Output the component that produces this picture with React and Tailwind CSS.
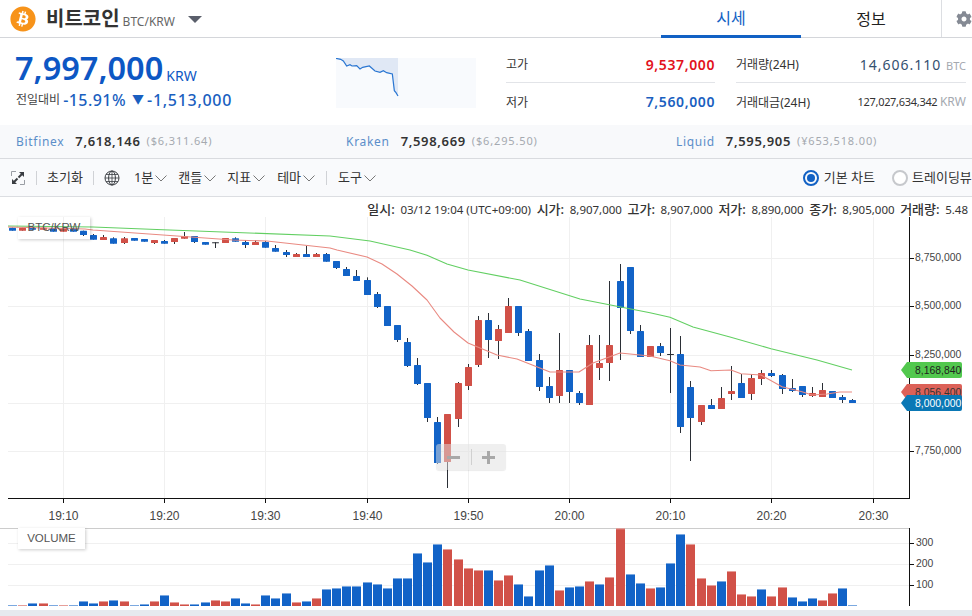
import React from 'react';
import { FaBitcoin, FaCog } from 'react-icons/fa';

const BLUE = '#1263c7';
const RED = '#d15148';
const DARK = '#2b2f36';

// [x, color, bodyTop, bodyBottom, wickTop, wickBottom] — first block in px*3 relative to y=215
const candlesA = [
  [12, 'b', 38, 47], [22, 'r', 38, 47], [32, 'b', 38, 44], [43, 'r', 38, 44], [53, 'b', 40, 50],
  [63, 'r', 40, 50], [73, 'b', 40, 50], [83, 'b', 47, 60, 47, 63], [93, 'b', 60, 74, 57, 74],
  [103, 'r', 66, 75, 60, 75], [113, 'b', 70, 86, 67, 86], [124, 'r', 70, 84, 66, 87],
  [134, 'b', 69, 77], [144, 'b', 72, 80], [154, 'r', 75, 84, 75, 87], [164, 'b', 78, 86, 75, 86],
  [174, 'r', 69, 81, 69, 87], [184, 'r', 63, 71, 51, 71], [194, 'b', 63, 81, 63, 84], [205, 'b', 81, 89],
  [215, 'd', 82, 84, 82, 99], [225, 'r', 69, 84], [235, 'b', 70, 80, 67, 80], [245, 'b', 81, 90, 75, 99],
  [255, 'r', 81, 90, 75, 90], [265, 'b', 81, 98, 78, 98], [275, 'b', 99, 110, 90, 110],
  [286, 'b', 111, 120, 105, 126], [296, 'r', 117, 126, 114, 126], [306, 'b', 117, 126, 93, 126],
  [316, 'r', 117, 126, 114, 126], [326, 'b', 117, 140, 114, 140],
].map(c => toPx(c, 215));

// relative to y=250
const candlesB = [
  [336, 'b', 33, 54, 33, 57], [346, 'b', 57, 78, 51, 78], [356, 'b', 78, 93, 60, 93], [367, 'b', 90, 135, 82, 135],
  [377, 'b', 132, 171, 126, 174], [387, 'b', 168, 228], [397, 'b', 225, 270, 225, 276], [407, 'b', 276, 348, 264, 351],
  [417, 'b', 345, 402, 324, 405], [427, 'b', 399, 504, 399, 516], [437, 'b', 516, 639, 501, 642],
  [447, 'r', 492, 636, 492, 714], [458, 'r', 399, 507, 396, 531], [468, 'r', 351, 408, 342, 420],
  [478, 'r', 210, 345, 198, 351], [488, 'b', 210, 270, 189, 324], [498, 'r', 237, 273, 225, 327],
  [508, 'r', 168, 249, 144, 249], [518, 'b', 168, 249, 168, 258], [528, 'b', 243, 333, 237, 333],
  [539, 'b', 330, 411, 312, 423], [549, 'b', 408, 444, 381, 459], [559, 'r', 360, 438, 249, 459],
  [569, 'b', 360, 426, 360, 459], [579, 'b', 429, 459, 423, 465], [589, 'r', 285, 465, 255, 465],
  [599, 'r', 339, 354, 255, 390], [609, 'r', 285, 339, 93, 393], [620, 'b', 93, 174, 42, 330],
  [630, 'b', 51, 243, 51, 252], [640, 'b', 243, 321, 225, 321], [650, 'r', 288, 321],
  [660, 'b', 288, 309, 279, 318], [670, 'd', 312, 315, 234, 429], [680, 'b', 312, 531, 258, 549],
  [690, 'b', 411, 504, 393, 633], [701, 'r', 465, 516, 465, 525], [711, 'b', 465, 477, 447, 477],
  [721, 'r', 444, 477, 411, 477], [731, 'r', 423, 432, 348, 450], [741, 'b', 399, 444, 372, 444],
  [751, 'r', 384, 432, 372, 450], [761, 'r', 369, 387, 360, 405], [771, 'b', 369, 378, 360, 381],
  [782, 'b', 375, 417, 372, 432], [792, 'b', 414, 423, 387, 426], [802, 'b', 408, 435, 408, 441],
  [812, 'r', 429, 438, 411, 441], [822, 'r', 420, 441, 399, 441], [832, 'b', 423, 444],
  [842, 'b', 441, 450, 435, 459], [852, 'b', 450, 459, 447, 459],
].map(c => toPx(c, 250));

function toPx([x, color, top, bottom, wickTop, wickBottom], base) {
  return {
    x,
    color,
    top: base + top / 3,
    bottom: base + bottom / 3,
    wickTop: base + (wickTop ?? top) / 3,
    wickBottom: base + (wickBottom ?? bottom) / 3,
  };
}

const candles = [...candlesA, ...candlesB];

// volume tops, px*3 relative to y=490
const volumeTops = [
  345, 345, 339, 339, 345, 345, 345, 333, 339, 333, 330, 333, 345, 342, 333, 315, 336, 342, 342, 336, 330, 333,
  324, 339, 342, 315, 324, 309, 336, 333, 324, 297, 294, 288, 288, 276, 282, 294, 264, 264, 189, 216, 162, 177,
  207, 234, 240, 240, 270, 255, 282, 318, 240, 225, 300, 291, 288, 273, 282, 261, 115, 252, 279, 294, 291, 219,
  132, 162, 264, 285, 273, 243, 312, 318, 297, 318, 291, 321, 333, 324, 330, 309, 294, 345,
];
const volumeColors = 'brbrbrbbbrbrbbrbrrbbrrbbrbbbrbrbbbbbbbbbbbbrrrrbrrbbbbrbbrbrrbbrbbbrrrbrrrbrrbbbrrbb';

const greenLine = '8,226 93,227 163,229.7 330,236 370,241 410,250 427,255.3 447,264 468,270 520,280 580,299 650,312.7 670,317.3 693,327 730,337 771,348.7 817,360 852,370';
const redLine = '8,227 85,229 93,230 233,240 267,241 330,248 337,250 367,257 382,264 397,274 412,286 427,300 440,318 454,332 468,343 497,355 517,359 550,372 579,372 593,363 620,353 650,356 670,360.7 680,365 700,367 711,370.7 731,370 741,373.7 761,375 782,386.7 802,391.7 812,395 827,394 840,392 852,392';

const sparkPoints = [
  [48, 25], [62, 28], [70, 33], [80, 48], [90, 44], [96, 48], [110, 47], [120, 57], [128, 52], [148, 48], [165, 63],
  [180, 67], [190, 62], [200, 68], [217, 72], [223, 122], [228, 128], [234, 138],
].map(([x, y]) => `${(x - 48) / 3},${(y - 24) / 3}`).join(' ');

const gridX = [63.5, 164.5, 265.5, 367.5, 468.5, 569.5, 670.5, 771.5, 873.5];
const timeLabels = ['19:10', '19:20', '19:30', '19:40', '19:50', '20:00', '20:10', '20:20', '20:30'];
const priceTicks = [[258.5, '8,750,000'], [306.5, '8,500,000'], [355.5, '8,250,000'], [451.5, '7,750,000']];

function Stat({ label, value, className, last }) {
  return (
    <div className={`flex items-center justify-between h-[37px] ${last ? '' : 'border-b border-[#e2e4e8]'}`}>
      <span className="text-[12px] text-[#333] mt-[2px]">{label}</span>
      <span className={`text-[14px] font-semibold tracking-[0.6px] ${className}`}>{value}</span>
    </div>
  );
}

function Exchange({ name, price, sub }) {
  return (
    <div className="flex items-center w-[330px] shrink-0">
      <span className="text-[12px] text-[#5b8ec9] tracking-[0.7px]">{name}</span>
      <span className="text-[13px] font-semibold text-[#333] ml-[11px] tracking-[0.65px]">{price}</span>
      <span className="text-[11px] text-[#a5a9b0] ml-[6px] tracking-[0.85px]">{sub}</span>
    </div>
  );
}

function Menu({ label, className }) {
  return (
    <div className={`flex items-center text-[13px] text-[#333] ${className}`}>
      {label}
      <svg width="12" height="7" viewBox="0 0 12 7" className="ml-[2px] mt-[2px]">
        <path d="M0.5 0.5L6 6L11.5 0.5" fill="none" stroke="#777" strokeWidth="1" />
      </svg>
    </div>
  );
}

function ExpandIcon() {
  return (
    <svg width="14" height="14" viewBox="0 0 14 14" className="ml-[11px]">
      <path d="M0.5 5V0.5H5M9 13.5H13.5V9" fill="none" stroke="#9a9ea5" strokeWidth="1" />
      <path d="M8 1H13V6L11.2 4.2L8.2 7.2L6.8 5.8L9.8 2.8ZM6 13H1V8L2.8 9.8L5.8 6.8L7.2 8.2L4.2 11.2Z" fill="#3a3d42" />
    </svg>
  );
}

function GlobeIcon() {
  return (
    <svg width="16" height="16" viewBox="0 0 16 16" className="ml-[10px]" fill="none" stroke="#3a3d42" strokeWidth="1">
      <circle cx="8" cy="8" r="7" />
      <ellipse cx="8" cy="8" rx="3.4" ry="7" />
      <path d="M8 1V15M1 8H15M2 4.5H14M2 11.5H14" strokeWidth="0.8" />
    </svg>
  );
}

function PriceTag({ y, fill, text, color }) {
  return (
    <g>
      <path
        d={`M901 ${y} L907 ${y - 8} H960 Q962 ${y - 8} 962 ${y - 6} V${y + 6} Q962 ${y + 8} 960 ${y + 8} H907 Z`}
        fill={fill}
      />
      <text x="915" y={y + 4} fontSize="10.4" fill={color} fontFamily="'Liberation Sans', sans-serif">{text}</text>
    </g>
  );
}

function MainChart() {
  return (
    <svg width="972" height="331" viewBox="0 197 972 331" className="block">
      {gridX.map(x => <line key={x} x1={x} x2={x} y1="217" y2="498" stroke="#f0f0f0" />)}
      {[258.5, 306.5, 355.5, 403.5, 451.5].map(y => <line key={y} x1="8" x2="909" y1={y} y2={y} stroke="#f0f0f0" />)}

      {candles.map(c => (
        <g key={c.x}>
          <line x1={c.x + 0.5} x2={c.x + 0.5} y1={c.wickTop} y2={c.wickBottom} stroke={DARK} />
          <rect
            x={c.x - 3}
            y={c.top}
            width="7"
            height={c.color === 'd' ? 1 : c.bottom - c.top}
            rx="0.5"
            fill={c.color === 'b' ? BLUE : c.color === 'r' ? RED : DARK}
          />
        </g>
      ))}

      <polyline points={greenLine} fill="none" stroke="#62cf62" strokeWidth="1.1" />
      <polyline points={redLine} fill="none" stroke="#e98a82" strokeWidth="1.1" strokeLinejoin="round" />

      {/* axes */}
      <line x1="909.5" x2="909.5" y1="217" y2="499" stroke="#111" />
      <line x1="8" x2="910" y1="498.5" y2="498.5" stroke="#111" />
      {gridX.map((x, i) => (
        <g key={x}>
          <line x1={x} x2={x} y1="498" y2="503" stroke="#111" />
          <text x={x} y="520" textAnchor="middle" fontSize="12" fill="#444" fontFamily="'Liberation Sans', sans-serif">{timeLabels[i]}</text>
        </g>
      ))}
      {priceTicks.map(([y, label]) => (
        <g key={label}>
          <line x1="909" x2="914" y1={y} y2={y} stroke="#111" />
          <text x="915" y={y + 2.5} fontSize="10.4" fill="#444" fontFamily="'Liberation Sans', sans-serif">{label}</text>
        </g>
      ))}
      <line x1="909" x2="914" y1="403.5" y2="403.5" stroke="#111" />

      <PriceTag y={370} fill="#52c84e" text="8,168,840" color="#222" />
      <PriceTag y={392} fill="#dc6158" text="8,056,400" color="#333" />
      <PriceTag y={403} fill="#0a78b5" text="8,000,000" color="#fff" />
    </svg>
  );
}

function VolumeChart() {
  return (
    <svg width="972" height="82" viewBox="0 528 972 82" className="block">
      <line x1="0" x2="910" y1="528.5" y2="528.5" stroke="#cccccc" />
      {[543.5, 564.5, 585.5].map(y => <line key={y} x1="8" x2="909" y1={y} y2={y} stroke="#f0f0f0" />)}
      {candles.map((c, i) => {
        const top = 490 + volumeTops[i] / 3;
        return (
          <g key={c.x}>
            <rect x={c.x - 4} y={top} width="9" height={606 - top} fill={volumeColors[i] === 'b' ? BLUE : RED} />
            <rect x={c.x - 4} y={top} width="9" height="1" fill="#fff" opacity="0.45" />
          </g>
        );
      })}
      <line x1="909.5" x2="909.5" y1="528" y2="606" stroke="#111" />
      {[[543.5, '300'], [564.5, '200'], [585.5, '100']].map(([y, label]) => (
        <g key={label}>
          <line x1="909" x2="914" y1={y} y2={y} stroke="#111" />
          <text x="916" y={y + 2.5} fontSize="10.4" fill="#444" fontFamily="'Liberation Sans', sans-serif">{label}</text>
        </g>
      ))}
    </svg>
  );
}

export default function App() {
  return (
    <div className="relative w-[972px] h-[616px] overflow-hidden bg-white font-['Noto_Sans','Noto_Sans_CJK_KR',sans-serif]">
      {/* Header */}
      <header className="flex items-center h-[38px] border-b border-[#d4d6da] pl-[10px]">
        <FaBitcoin size={26} className="text-[#f7931a]" />
        <span className="ml-[10px] text-[20px] font-bold text-[#333] leading-none">비트코인</span>
        <span className="ml-[3px] mt-[6px] text-[12px] text-[#666] font-['Noto_Sans']">BTC/KRW</span>
        <span className="ml-[13px] mt-[2px] w-0 h-0 border-x-[7px] border-x-transparent border-t-[7px] border-t-[#5a5f6b]" />
        <div className="ml-auto flex h-full">
          <div className="w-[140px] flex items-center justify-center text-[16px] text-[#1261c4] border-b-[3px] border-[#1261c4] h-[38px]">시세</div>
          <div className="w-[140px] flex items-center justify-center text-[16px] text-[#222]">정보</div>
          <div className="w-[31px] border-l border-[#dcdee2] flex items-center justify-end overflow-hidden">
            <FaCog size={16} className="text-[#858a94]" />
          </div>
        </div>
      </header>

      {/* Price summary */}
      <section className="flex h-[87px]">
        <div className="w-[336px] pl-[15px] pt-[7px]">
          <div className="flex items-end text-[#0d57c4]">
            <span className="text-[32.5px] font-semibold leading-[46px]">7,997,000</span>
            <span className="text-[14px] ml-[3px] mb-[5px] leading-5">KRW</span>
          </div>
          <div className="flex items-center -mt-[3px]">
            <span className="text-[12px] text-[#444] ml-[1px]">전일대비</span>
            <span className="ml-[3px] text-[16px] font-medium text-[#1a5fc0] tracking-[0.45px]">-15.91%</span>
            <span className="ml-[6px] text-[12px] text-[#1a5fc0]">▼</span>
            <span className="ml-[3px] text-[16px] font-medium text-[#1a5fc0] tracking-[0.7px]">-1,513,000</span>
          </div>
        </div>
        <div className="w-[140px] h-[50px] mt-[20px] bg-[#f8fafd]">
          <svg width="140" height="50" viewBox="0 0 140 50" className="block">
            <polygon points={`${sparkPoints} 62,0 0,0`} fill="#e0e8f5" />
            <polyline points={sparkPoints} fill="none" stroke="#2a76d2" strokeWidth="1.2" />
          </svg>
        </div>
        <div className="w-[209px] ml-[30px] mt-[8px]">
          <Stat label="고가" value="9,537,000" className="text-[#e2111c]" />
          <Stat label="저가" value="7,560,000" className="text-[#1a5fc0]" last />
        </div>
        <div className="w-[230px] ml-[21px] mt-[8px]">
          <div className="flex items-center justify-between h-[37px] border-b border-[#e2e4e8]">
            <span className="text-[12px] text-[#333] mt-[2px]">거래량(24H)</span>
            <span className="text-[14px] text-[#34506f] tracking-[1px]">14,606.110 <span className="text-[11px] text-[#a5a9b0] tracking-normal">BTC</span></span>
          </div>
          <div className="flex items-center justify-between h-[37px]">
            <span className="text-[12px] text-[#333] mt-[2px]">거래대금(24H)</span>
            <span className="text-[11px] text-[#333] tracking-[-0.3px]">127,027,634,342 <span className="text-[12px] text-[#a5a9b0] tracking-normal">KRW</span></span>
          </div>
        </div>
      </section>

      {/* Exchange prices */}
      <section className="flex items-center h-[34px] pl-[16px] bg-[#f8f9fb] border-b border-[#d9dbdf] overflow-hidden">
        <Exchange name="Bitfinex" price="7,618,146" sub="($6,311.64)" />
        <Exchange name="Kraken" price="7,598,669" sub="($6,295.50)" />
        <Exchange name="Liquid" price="7,595,905" sub="(¥653,518.00)" />
      </section>

      {/* Chart toolbar */}
      <section className="flex items-center h-[38px] bg-[#f9fafc] border-b border-[#dcdee2]">
        <ExpandIcon />
        <span className="w-px h-[14px] bg-[#d0d2d6] ml-[11px]" />
        <span className="ml-[10px] text-[13px] text-[#333]">초기화</span>
        <span className="w-px h-[14px] bg-[#d0d2d6] ml-[10px]" />
        <GlobeIcon />
        <Menu label="1분" className="ml-[14px]" />
        <Menu label="캔들" className="ml-[11px]" />
        <Menu label="지표" className="ml-[11px]" />
        <Menu label="테마" className="ml-[12px]" />
        <span className="w-px h-[14px] bg-[#d0d2d6] ml-[11px]" />
        <Menu label="도구" className="ml-[11px]" />
        <div className="ml-auto flex items-center">
          <span className="w-[16px] h-[16px] rounded-full border-2 border-[#1261c4] flex items-center justify-center">
            <span className="w-[8px] h-[8px] rounded-full bg-[#1261c4]" />
          </span>
          <span className="ml-[5px] text-[13px] text-[#333]">기본 차트</span>
          <span className="ml-[17px] w-[16px] h-[16px] rounded-full border-2 border-[#c6c8cc] bg-white" />
          <span className="ml-[4px] text-[13px] text-[#333] whitespace-nowrap w-[60px] overflow-hidden">트레이딩뷰</span>
        </div>
      </section>

      {/* Chart panes */}
      <div className="relative">
        <MainChart />
        <VolumeChart />
        <div className="h-[6px] bg-[#e6e9ef]" />

        {/* OHLC info */}
        <div className="absolute top-[3px] right-[4px] flex items-center gap-[5.6px] text-[11.5px] text-[#333] whitespace-nowrap">
          <span className="text-[13px] font-medium">일시:</span><span>03/12 19:04 (UTC+09:00)</span>
          <span className="text-[13px] font-medium">시가:</span><span>8,907,000</span>
          <span className="text-[13px] font-medium">고가:</span><span>8,907,000</span>
          <span className="text-[13px] font-medium">저가:</span><span>8,890,000</span>
          <span className="text-[13px] font-medium">종가:</span><span>8,905,000</span>
          <span className="text-[13px] font-medium">거래량:</span><span>5.48</span>
        </div>

        {/* pane labels */}
        <div className="absolute top-[20px] left-[18px] w-[72px] h-[22px] flex items-center justify-center text-[11.5px] text-[#555] shadow-[1px_1px_3px_rgba(0,0,0,0.2)] font-['Liberation_Sans',sans-serif]">BTC/KRW</div>
        <div className="absolute top-[331px] left-[18px] w-[67px] h-[21px] flex items-center justify-center bg-white text-[11.5px] text-[#555] shadow-[1px_1px_3px_rgba(0,0,0,0.2)] font-['Liberation_Sans',sans-serif]">VOLUME</div>

        {/* zoom control */}
        <div className="absolute top-[247px] left-[436px] w-[70px] h-[26px] flex items-center rounded-[3px] bg-[#e0e0e0]/50 shadow-[0_1px_1px_rgba(0,0,0,0.08)]">
          <span className="w-[35px] flex justify-center"><span className="w-[13px] h-[3px] bg-[#a8a8a8]" /></span>
          <span className="w-px h-[16px] bg-[#d0d0d0]" />
          <span className="relative w-[34px] h-[13px]">
            <span className="absolute left-[10px] top-[5px] w-[13px] h-[3px] bg-[#a8a8a8]" />
            <span className="absolute left-[15px] top-0 w-[3px] h-[13px] bg-[#a8a8a8]" />
          </span>
        </div>
      </div>
    </div>
  );
}
